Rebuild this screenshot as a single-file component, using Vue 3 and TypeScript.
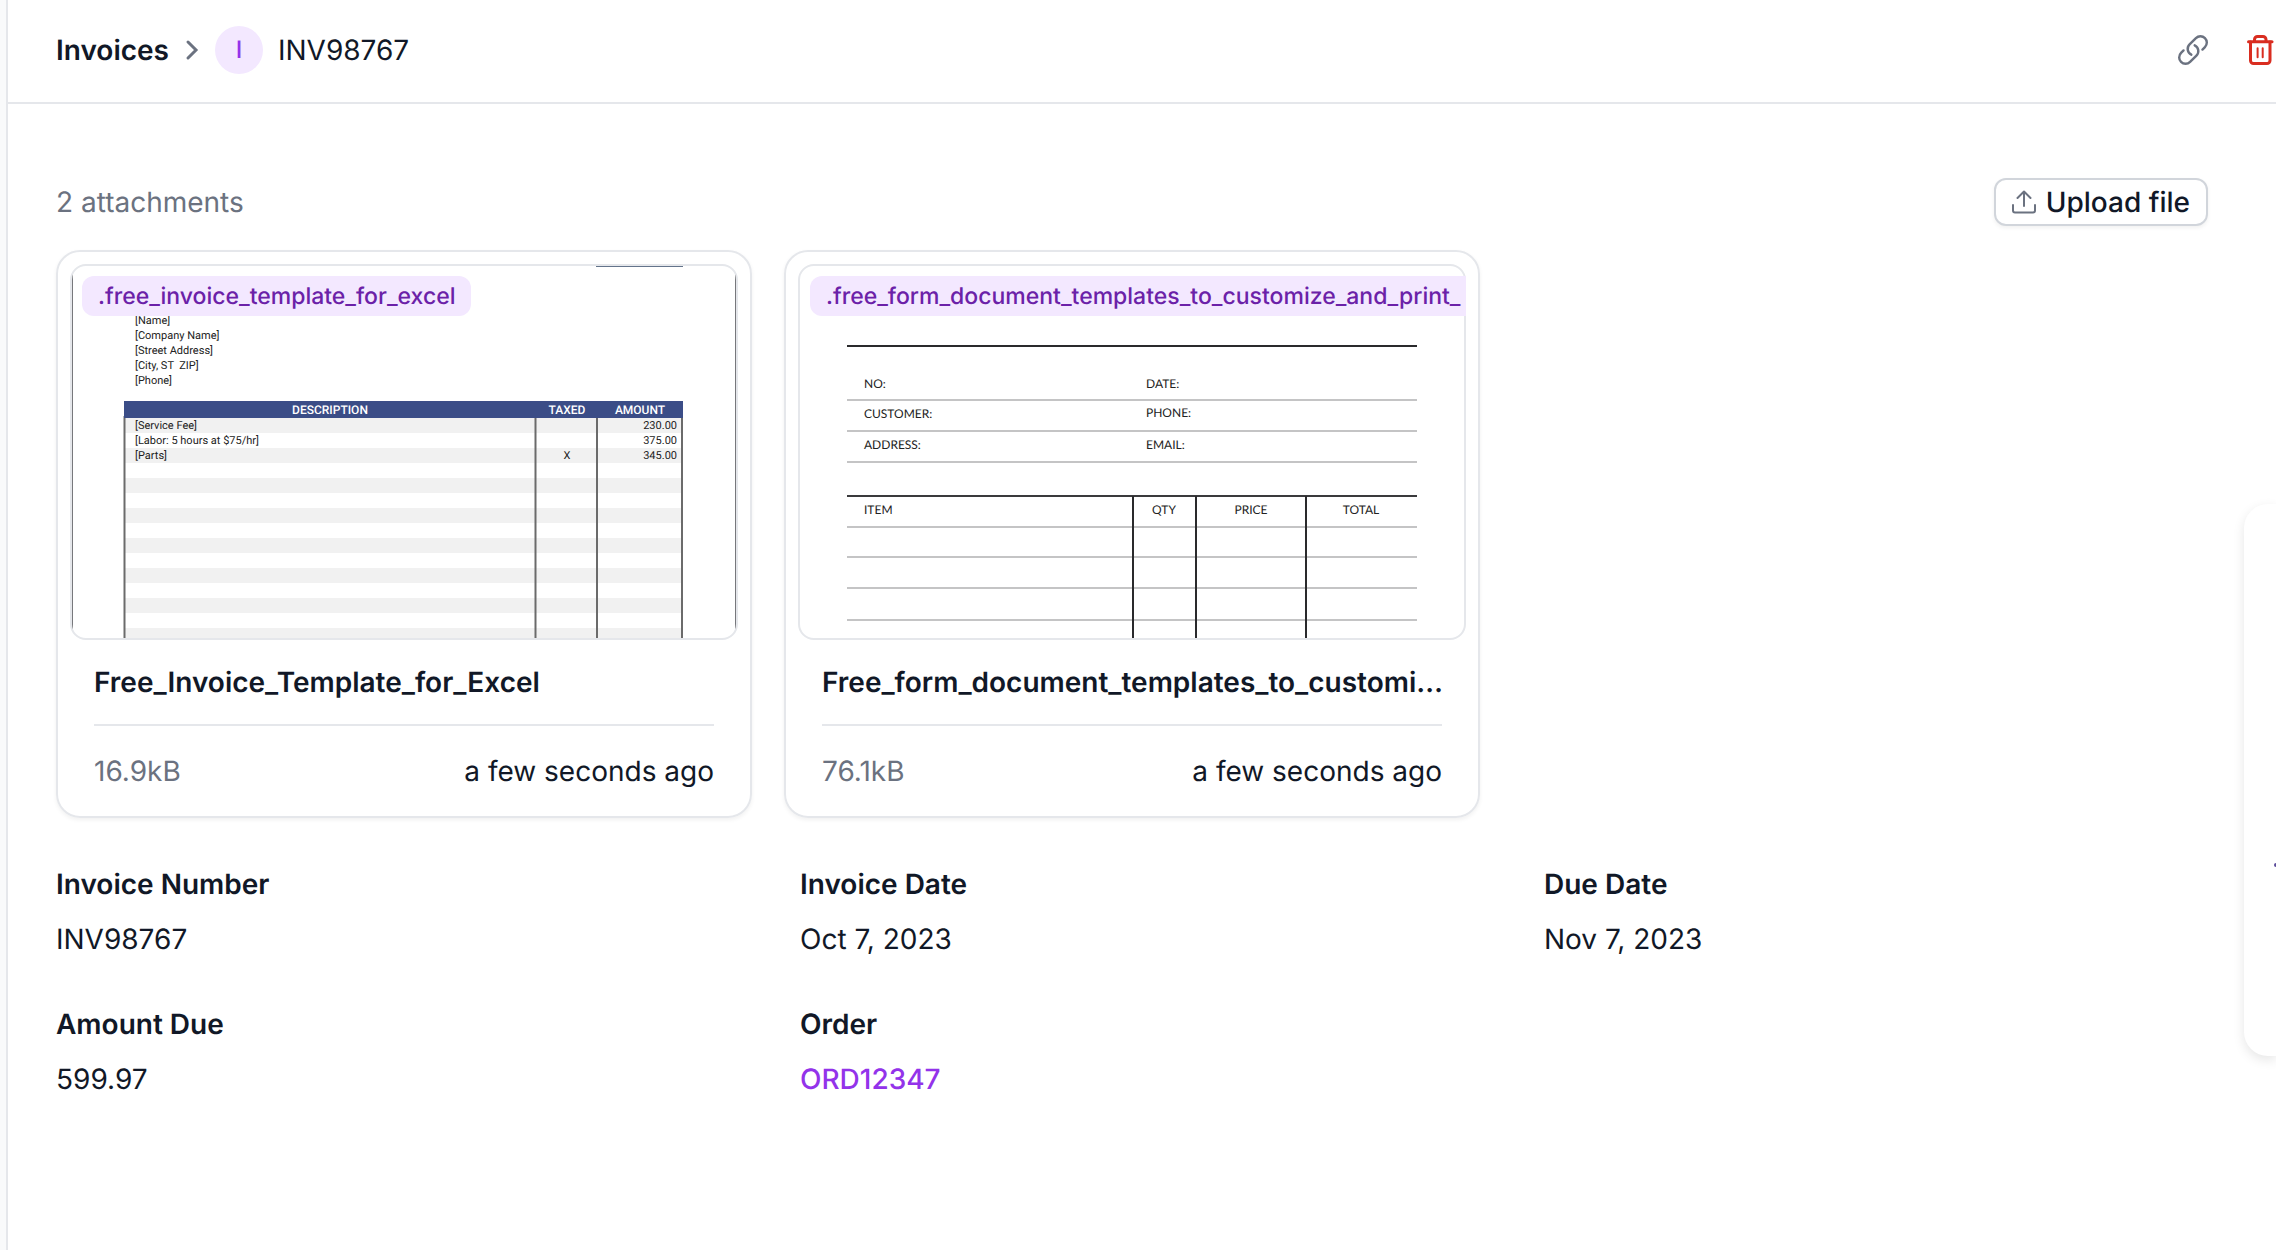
<script setup lang="ts">
interface Attachment {
  id: 'spreadsheet' | 'form'
  tag: string
  title: string
  size: string
  added: string
}

interface Field {
  label: string
  value: string
  link?: boolean
}

const attachments: Attachment[] = [
  {
    id: 'spreadsheet',
    tag: '.free_invoice_template_for_excel',
    title: 'Free_Invoice_Template_for_Excel',
    size: '16.9kB',
    added: 'a few seconds ago',
  },
  {
    id: 'form',
    tag: '.free_form_document_templates_to_customize_and_print_',
    title: 'Free_form_document_templates_to_customize_and_print_',
    size: '76.1kB',
    added: 'a few seconds ago',
  },
]

const fields: Field[] = [
  { label: 'Invoice Number', value: 'INV98767' },
  { label: 'Invoice Date', value: 'Oct 7, 2023' },
  { label: 'Due Date', value: 'Nov 7, 2023' },
  { label: 'Amount Due', value: '599.97' },
  { label: 'Order', value: 'ORD12347', link: true },
]

const senderLines = ['[Name]', '[Company Name]', '[Street Address]', '[City, ST  ZIP]', '[Phone]']
const stripes = [152, 182, 212, 242, 272, 302, 332, 362]
const lineItems = [
  { text: '[Service Fee]', taxed: '', amount: '230.00' },
  { text: '[Labor: 5 hours at $75/hr]', taxed: '', amount: '375.00' },
  { text: '[Parts]', taxed: 'X', amount: '345.00' },
]
const formRules = [134, 165, 196, 261, 291, 322, 354]
</script>

<template>
  <div class="page">
    <div class="rail"></div>
    <div class="content">
      <header class="topbar">
        <nav class="crumbs" aria-label="Breadcrumb">
          <a class="crumb-root" href="#invoices">Invoices</a>
          <svg class="chevron" viewBox="0 0 16 24" aria-hidden="true">
            <path d="M4 4l8 8-8 8" />
          </svg>
          <span class="avatar">I</span>
          <span>INV98767</span>
        </nav>
        <div class="actions">
          <button class="icon-button" type="button" aria-label="Copy link">
            <svg class="link-icon" viewBox="0 0 24 24" aria-hidden="true">
              <path
                d="M13.19 8.688a4.5 4.5 0 0 1 1.242 7.244l-4.5 4.5a4.5 4.5 0 0 1-6.364-6.364l1.757-1.757m13.35-.622 1.757-1.757a4.5 4.5 0 0 0-6.364-6.364l-4.5 4.5a4.5 4.5 0 0 0 1.242 7.244"
              />
            </svg>
          </button>
          <button class="icon-button" type="button" aria-label="Delete">
            <svg class="trash-icon" viewBox="0 0 34 36" aria-hidden="true">
              <path d="M6.5 9.8h23.5" />
              <path d="M12.5 9.5V7.5a3 3 0 0 1 3-3h5.500a3 3 0 0 1 3 3v2" />
              <path d="M8.500 10v18.500a3 3 0 0 0 3 3h13.500a3 3 0 0 0 3-3V10" />
              <path class="slats" d="M15.600 16.300v9M20.700 16.300v9" />
            </svg>
          </button>
        </div>
      </header>

      <main class="main">
        <div class="toolbar">
          <span class="count">2 attachments</span>
          <button class="upload" type="button">
            <svg class="upload-icon" viewBox="0 0 24 24" aria-hidden="true">
              <path d="M12 16V1.5M5.5 8L12 1.5 18.5 8M1 15v5.5a2 2 0 0 0 2 2h18a2 2 0 0 0 2-2V15" />
            </svg>
            Upload file
          </button>
        </div>

        <div class="cards">
          <article v-for="file in attachments" :key="file.id" class="card">
            <div class="preview">
              <div class="thumb">
                <svg
                  v-if="file.id === 'spreadsheet'"
                  class="sheet"
                  viewBox="0 0 664 372"
                  aria-hidden="true"
                >
                  <rect x="524" y="0" width="87" height="1" fill="#64748b" />
                  <path d="M0.5 8v356M663.5 8v356" stroke="#77787c" />
                  <text
                    v-for="(line, i) in senderLines"
                    :key="line"
                    x="63"
                    :y="58 + i * 15"
                  >{{ line }}</text>
                  <rect
                    v-for="y in stripes"
                    :key="y"
                    x="53"
                    :y="y"
                    width="557"
                    height="15"
                    fill="#f1f1f1"
                  />
                  <path d="M52.5 150v222M463.5 150v222M525 150v222M610 150v222" stroke="#6b6b6b" stroke-width="2" />
                  <rect x="52" y="135" width="559" height="17" fill="#3b4d87" />
                  <g class="sheet-head">
                    <text x="258" y="148">DESCRIPTION</text>
                    <text x="495" y="148">TAXED</text>
                    <text x="568" y="148">AMOUNT</text>
                  </g>
                  <g v-for="(item, i) in lineItems" :key="item.text">
                    <text x="63" :y="163 + i * 15">{{ item.text }}</text>
                    <text x="495" :y="163 + i * 15" text-anchor="middle">{{ item.taxed }}</text>
                    <text x="605" :y="163 + i * 15" text-anchor="end">{{ item.amount }}</text>
                  </g>
                </svg>
                <svg v-else class="form" viewBox="0 0 664 372" aria-hidden="true">
                  <rect
                    v-for="y in formRules"
                    :key="y"
                    x="47"
                    :y="y - 1"
                    width="570"
                    height="2"
                    fill="#c4c4c5"
                  />
                  <rect x="47" y="79" width="570" height="2" fill="#2a2a2c" />
                  <rect x="47" y="229" width="570" height="2" fill="#3a3a3c" />
                  <path d="M333 230v142M396 230v142M506 230v142" stroke="#2a2a2c" stroke-width="2" />
                  <text x="64" y="122">NO:</text>
                  <text x="64" y="152">CUSTOMER:</text>
                  <text x="64" y="183">ADDRESS:</text>
                  <text x="346" y="122">DATE:</text>
                  <text x="346" y="151">PHONE:</text>
                  <text x="346" y="183">EMAIL:</text>
                  <text x="64" y="248">ITEM</text>
                  <g text-anchor="middle">
                    <text x="364" y="248">QTY</text>
                    <text x="451" y="248">PRICE</text>
                    <text x="561" y="248">TOTAL</text>
                  </g>
                </svg>
              </div>
              <span class="tag">{{ file.tag }}</span>
            </div>
            <div class="card-body">
              <div class="card-title">{{ file.title }}</div>
              <div class="card-meta">
                <span class="size">{{ file.size }}</span>
                <span>{{ file.added }}</span>
              </div>
            </div>
          </article>
        </div>

        <dl class="fields">
          <div v-for="field in fields" :key="field.label">
            <dt>{{ field.label }}</dt>
            <dd>
              <a v-if="field.link" class="order-link" href="#order">{{ field.value }}</a>
              <template v-else>{{ field.value }}</template>
            </dd>
          </div>
        </dl>
      </main>
    </div>

    <aside class="drawer" aria-label="Side panel">
      <span class="drawer-dot"></span>
    </aside>
  </div>
</template>

<style>
body {
  margin: 0;
  overflow-x: hidden;
}
</style>

<style scoped>
.page {
  position: relative;
  display: flex;
  min-height: 100vh;
  overflow: hidden;
  background: #fff;
  color: #111827;
  font-family: Inter, 'Liberation Sans', sans-serif;
  font-size: 28px;
  line-height: 40px;
  text-rendering: geometricPrecision;
}

.rail {
  flex: none;
  width: 6px;
  border-right: 2px solid #e5e7eb;
  background: #f9fafb;
}

.content {
  flex: 1;
  min-width: 0;
}

.topbar {
  display: flex;
  align-items: center;
  justify-content: space-between;
  padding: 26px 0 28px 48px;
  border-bottom: 2px solid #e5e7eb;
}

.crumbs {
  display: flex;
  align-items: center;
  gap: 15px;
}

.crumb-root {
  color: inherit;
  font-weight: 600;
  text-decoration: none;
}

svg {
  display: block;
}

.chevron {
  width: 16px;
  height: 24px;
  fill: none;
  stroke: #6b7280;
  stroke-width: 3;
  stroke-linecap: round;
}

.avatar {
  width: 48px;
  height: 48px;
  border-radius: 50%;
  background: #f3e8ff;
  color: #9333ea;
  font-size: 24px;
  font-weight: 500;
  line-height: 48px;
  text-align: center;
}

.actions {
  display: flex;
  align-items: center;
  gap: 32px;
}

.icon-button {
  padding: 0;
  border: 0;
  background: none;
  cursor: pointer;
}

.link-icon {
  width: 34px;
  height: 34px;
  fill: none;
  stroke: #6b7280;
  stroke-width: 1.7;
  stroke-linecap: round;
  stroke-linejoin: round;
}

.trash-icon {
  width: 34px;
  height: 36px;
  fill: none;
  stroke: #d92d20;
  stroke-width: 3;
  stroke-linecap: round;
}

.slats {
  stroke-width: 2;
}

.main {
  padding: 74px 68px 64px 48px;
}

.toolbar {
  display: flex;
  align-items: center;
  justify-content: space-between;
}

.count,
.size {
  color: #6b7280;
}

.upload {
  display: flex;
  align-items: center;
  gap: 10px;
  height: 48px;
  padding: 0 16px;
  border: 2px solid #d1d5db;
  border-radius: 12px;
  background: #fff;
  box-shadow: 0 2px 4px rgb(0 0 0 / 6%);
  color: #111827;
  font: inherit;
  font-weight: 500;
  text-rendering: inherit;
  cursor: pointer;
}

.upload-icon {
  width: 24px;
  height: 24px;
  fill: none;
  stroke: #6b7280;
  stroke-width: 2;
  stroke-linecap: round;
  stroke-linejoin: round;
}

.cards {
  display: grid;
  grid-template-columns: repeat(3, minmax(0, 1fr));
  gap: 32px;
  margin-top: 24px;
}

.card {
  padding: 12px;
  border: 2px solid #e5e7eb;
  border-radius: 24px;
  box-shadow: 0 2px 4px rgb(0 0 0 / 6%);
}

.preview {
  position: relative;
  overflow: hidden;
}

.thumb {
  overflow: hidden;
  border: 2px solid #e5e7eb;
  border-radius: 16px;
}

.thumb svg {
  width: 100%;
}

.sheet text {
  fill: #222;
  font-family: Roboto, sans-serif;
  font-size: 11px;
  white-space: pre;
}

.sheet .sheet-head text {
  fill: #fff;
  font-size: 12px;
  font-weight: 500;
  text-anchor: middle;
}

.form text {
  fill: #222;
  font-family: Lato, sans-serif;
  font-size: 12px;
}

.tag {
  position: absolute;
  top: 12px;
  left: 12px;
  padding: 0 16px;
  border-radius: 12px;
  background: #f3e8ff;
  color: #6b21a8;
  font-size: 23px;
  font-weight: 500;
  white-space: nowrap;
}

.card-body {
  padding: 22px 24px 13px;
}

.card-title {
  overflow: hidden;
  margin-right: -16px;
  text-overflow: ellipsis;
  font-weight: 600;
  white-space: nowrap;
}

.card-meta {
  display: flex;
  justify-content: space-between;
  margin-top: 22px;
  padding-top: 25px;
  border-top: 2px solid #e5e7eb;
}

.fields {
  display: grid;
  grid-template-columns: repeat(3, minmax(0, 1fr));
  gap: 45px 80px;
  margin: 46px 0 0;
}

dt {
  font-weight: 600;
}

dd {
  margin: 15px 0 0;
}

.order-link {
  color: #9333ea;
  font-weight: 500;
  text-decoration: none;
}

.drawer {
  position: absolute;
  top: 504px;
  right: 0;
  display: flex;
  align-items: center;
  justify-content: flex-end;
  box-sizing: border-box;
  width: 32px;
  height: 552px;
  padding-top: 170px;
  border-radius: 24px 0 0 24px;
  background: #fff;
  box-shadow: 0 4px 12px rgb(0 0 0 / 10%);
}

.drawer-dot {
  width: 2px;
  height: 4px;
  border-radius: 2px 0 0 2px;
  background: #5b4b9a;
}
</style>
